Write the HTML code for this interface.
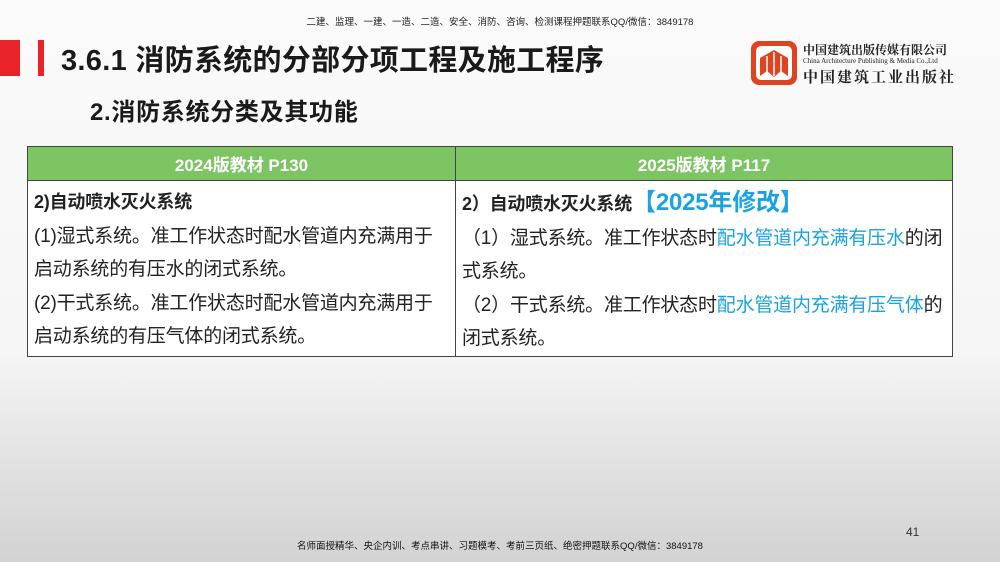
<!DOCTYPE html>
<html><head><meta charset="utf-8"><style>
*{margin:0;padding:0;box-sizing:border-box}
body{width:1000px;height:562px;overflow:hidden;position:relative;font-family:"Liberation Sans","Noto Sans CJK SC",sans-serif;background:linear-gradient(#fafafa 0%,#f6f6f6 62%,#e6e6e6 78%,#d2d2d2 100%);color:#222}
.top{position:absolute;top:14px;left:0;width:1000px;text-align:center;font-size:9.5px;color:#222}
.bar{position:absolute;left:0;top:40px;width:20px;height:36px;background:#e8242a}
.bar2{position:absolute;left:38px;top:40px;width:6px;height:36px;background:#e8242a}
h1{position:absolute;left:61px;top:37px;font-size:29px;font-weight:bold;color:#1a1a1a;letter-spacing:0.3px}
h2{position:absolute;left:90px;top:92px;font-size:24px;font-weight:bold;color:#1a1a1a;letter-spacing:0.7px}
.logo{position:absolute;left:750px;top:40px}
.lt{position:absolute;left:803px;font-family:"Noto Serif CJK SC",serif;color:#222}
table{position:absolute;left:27px;top:146px;width:926px;border-collapse:collapse;background:#fff}
td,th{border:1.5px solid #444;vertical-align:top}
th{background:#7dc563;color:#fff;font-size:17px;height:34px;font-weight:bold;text-align:center;vertical-align:middle}
td{font-size:19px;line-height:33.5px;padding:5px 6px 0 6px;height:167px;white-space:nowrap;letter-spacing:-0.2px}
.b{font-weight:bold;font-size:18px}
.blue{color:#1aa3e0}
.tag{color:#1aa3e0;font-weight:bold;font-size:24px}
.foot{position:absolute;top:538px;left:0;width:1000px;text-align:center;font-size:9.5px;color:#111}
.pg{position:absolute;left:906px;top:525px;font-size:12px;color:#333}
</style></head><body>
<div class="top">二建、监理、一建、一造、二造、安全、消防、咨询、检测课程押题联系QQ/微信：3849178</div>
<div class="bar"></div><div class="bar2"></div>
<h1>3.6.1 消防系统的分部分项工程及施工程序</h1>
<h2>2.消防系统分类及其功能</h2>
<svg class="logo" width="48" height="46" viewBox="0 0 48 46"><rect x="1" y="1" width="46" height="44" rx="8" fill="#e0431f"/><rect x="6" y="6" width="36" height="34" rx="5" fill="#fff"/><path d="M10 36V18l14-8 14 8v18l-7-5-7 6-7-6z" fill="#e0431f"/><path d="M24 12v24M17 16v16M31 16v16" stroke="#fff" stroke-width="1.5"/></svg>
<div class="lt" style="top:41px;font-size:12px;font-weight:bold">中国建筑出版传媒有限公司</div>
<div class="lt" style="top:57px;font-size:7px;font-family:'Liberation Serif',serif">China Architecture Publishing &amp; Media Co.,Ltd</div>
<div class="lt" style="top:66px;font-size:15px;font-weight:bold;letter-spacing:2px">中国建筑工业出版社</div>
<table><tr><th style="width:428px">2024版教材 P130</th><th>2025版教材 P117</th></tr>
<tr><td><span class="b">2)自动喷水灭火系统</span><br>(1)湿式系统。准工作状态时配水管道内充满用于<br>启动系统的有压水的闭式系统。<br>(2)干式系统。准工作状态时配水管道内充满用于<br>启动系统的有压气体的闭式系统。</td>
<td><span class="b">2）自动喷水灭火系统</span><span class="tag">【2025年修改】</span><br>（1）湿式系统。准工作状态时<span class="blue">配水管道内充满有压水</span>的闭<br>式系统。<br>（2）干式系统。准工作状态时<span class="blue">配水管道内充满有压气体</span>的<br>闭式系统。</td></tr></table>
<div class="pg">41</div>
<div class="foot">名师面授精华、央企内训、考点串讲、习题模考、考前三页纸、绝密押题联系QQ/微信：3849178</div>
</body></html>
